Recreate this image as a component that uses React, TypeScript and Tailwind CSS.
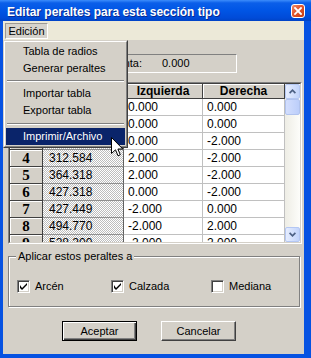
import React from 'react';

const rows = [
  { n: '1', r: '0.000', i: '0.000', d: '0.000' },
  { n: '2', r: '150.000', i: '0.000', d: '0.000' },
  { n: '3', r: '250.000', i: '0.000', d: '-2.000' },
  { n: '4', r: '312.584', i: '2.000', d: '-2.000' },
  { n: '5', r: '364.318', i: '2.000', d: '-2.000' },
  { n: '6', r: '427.318', i: '0.000', d: '-2.000' },
  { n: '7', r: '427.449', i: '-2.000', d: '0.000' },
  { n: '8', r: '494.770', i: '-2.000', d: '2.000' },
  { n: '9', r: '528.200', i: '-2.000', d: '2.000' },
];

function Check({ checked }: { checked: boolean }) {
  return (
    <div className="w-[13px] h-[13px] shrink-0 bg-white border border-t-[#808080] border-l-[#808080] border-r-white border-b-white shadow-[inset_1px_1px_0_#404040,inset_-1px_-1px_0_#d4d0c8] flex items-center justify-center">
      {checked && (
        <svg width="7" height="7" viewBox="0 0 7 7">
          <path d="M0 2 L0 5 L2 7 L7 2 L7 0 L2 5 Z" fill="#000" />
        </svg>
      )}
    </div>
  );
}

function ScrollBtn({ up }: { up: boolean }) {
  return (
    <div className="h-[15px] w-full shrink-0 rounded-[2px] border border-[#b4c7f3] bg-[linear-gradient(to_right,#e6edfe,#c2d4fb)] flex items-center justify-center">
      <svg width="7" height="5" viewBox="0 0 7 5">
        <path d={up ? 'M0.6 4.2 L3.5 1.2 L6.4 4.2' : 'M0.6 0.8 L3.5 3.8 L6.4 0.8'} stroke="#4d6185" strokeWidth="1.7" fill="none" />
      </svg>
    </div>
  );
}

export default function App() {
  return (
    <div className="relative w-[311px] h-[358px] overflow-hidden bg-[#0652e2] flex flex-col font-['Liberation_Sans',Arial,sans-serif] text-[11px] text-black select-none">
      {/* Title bar */}
      <div className="h-[21px] shrink-0 flex items-start pl-[7px] pr-[6px] bg-[linear-gradient(to_bottom,#3d8dfb_0%,#0b5fe9_14%,#0055e5_50%,#004bd8_85%,#0043c6_100%)]">
        <span className="mt-[5px] text-[12px] leading-[15px] font-bold text-white whitespace-nowrap [text-shadow:1px_1px_0_#0a2a8f]">
          Editar peraltes para esta sección tipo
        </span>
        <div className="ml-auto mt-[4px] w-[14px] h-[14px] rounded-[3px] border border-white bg-[linear-gradient(135deg,#ec8c6c_0%,#e2552c_45%,#c63c12_100%)] flex items-center justify-center">
          <svg width="8" height="8" viewBox="0 0 8 8">
            <path d="M1 1 L7 7 M7 1 L1 7" stroke="#fff" strokeWidth="1.8" strokeLinecap="square" />
          </svg>
        </div>
      </div>

      {/* Frame + client */}
      <div className="flex-1 flex flex-col pl-[3px] pr-[7px] pb-[4px]">
        {/* Menu bar */}
        <div className="h-[19px] shrink-0 bg-[#ECE9D8] flex items-start pl-[2px] pt-[2px]">
          <div className="w-[43px] h-[16px] bg-[#d6d3cc] border border-t-[#9c9a94] border-l-[#9c9a94] border-r-white border-b-white flex items-center justify-center leading-[13px]">
            Edición
          </div>
        </div>

        {/* Client */}
        <div className="flex-1 bg-[#D4D0C8] flex flex-col pl-[5px] pr-[2px]">
          {/* Field */}
          <div className="mt-[14px] w-[229px] h-[19px] shrink-0 border border-t-[#808080] border-l-[#808080] border-r-white border-b-white flex items-center leading-[13px]">
            <span className="w-[133px] text-right whitespace-nowrap">Peralte en la punta:</span>
            <span className="ml-[20px]">0.000</span>
          </div>

          {/* Table */}
          <div className="mt-[9px] w-[294px] h-[162px] shrink-0 border border-t-[#808080] border-l-[#808080] border-r-white border-b-white">
            <div className="w-full h-full border border-t-[#404040] border-l-[#404040] border-r-[#d4d0c8] border-b-[#d4d0c8] flex">
              <div className="flex-1 h-full overflow-hidden flex flex-col bg-white">
                <div className="flex h-[15px] shrink-0 font-bold text-[12px] leading-[14px]">
                  <div className="w-[33px] h-full bg-[#D4D0C8] border-r border-b border-r-[#404040] border-b-[#404040] shadow-[inset_1px_1px_0_#ffffff]" />
                  <div className="w-[81px] h-full bg-[#D4D0C8] border-r border-b border-r-[#404040] border-b-[#404040] shadow-[inset_1px_1px_0_#ffffff] flex items-center justify-center">Radio</div>
                  <div className="w-[79px] h-full bg-[#D4D0C8] border-r border-b border-r-[#404040] border-b-[#404040] shadow-[inset_1px_1px_0_#ffffff] flex items-center justify-center">Izquierda</div>
                  <div className="w-[82px] h-full bg-[#D4D0C8] border-r border-b border-r-[#404040] border-b-[#404040] shadow-[inset_1px_1px_0_#ffffff] flex items-center justify-center">Derecha</div>
                </div>
                {rows.map((row) => (
                  <div key={row.n} className="flex h-[17px] shrink-0 text-[12px] leading-[16px]">
                    <div className="w-[33px] h-full bg-[#D4D0C8] border-r border-b border-r-[#404040] border-b-[#404040] shadow-[inset_1px_1px_0_#ffffff] flex items-center justify-center font-['Liberation_Serif',serif] font-bold text-[15px]">
                      {row.n}
                    </div>
                    <div className="w-[81px] h-full border-r border-b border-r-[#606060] border-b-[#909090] bg-[repeating-conic-gradient(#bdbdbd_0_25%,#ffffff_0_50%)] bg-[length:2px_2px] pl-[6px] flex items-center">
                      {row.r}
                    </div>
                    <div className="w-[79px] h-full border-r border-b border-[#c0c0c0] pl-[4px] flex items-center">{row.i}</div>
                    <div className="w-[82px] h-full border-r border-b border-[#c0c0c0] pl-[4px] flex items-center">{row.d}</div>
                  </div>
                ))}
              </div>
              <div className="w-[15px] h-full shrink-0 flex flex-col bg-[linear-gradient(to_right,#eeede5,#fdfdfa)]">
                <ScrollBtn up={true} />
                <div className="h-[16px] w-full shrink-0 rounded-[2px] border border-[#b1c3ee] bg-[linear-gradient(to_right,#d3defd,#bccefa)]" />
                <div className="flex-1" />
                <ScrollBtn up={false} />
              </div>
            </div>
          </div>

          {/* Group box */}
          <div className="relative mt-[12px] w-[292px] h-[51px] shrink-0 border border-[#808080] shadow-[inset_1px_1px_0_#ffffff,1px_1px_0_#ffffff] flex items-start pl-[8px] pt-[23px]">
            <span className="absolute left-[7px] -top-[7px] px-[2px] bg-[#D4D0C8] leading-[13px] whitespace-nowrap">
              Aplicar estos peraltes a
            </span>
            <div className="w-[94px] flex items-center gap-[5px]">
              <Check checked={true} />
              <span className="leading-[13px]">Arcén</span>
            </div>
            <div className="w-[100px] flex items-center gap-[5px]">
              <Check checked={true} />
              <span className="leading-[13px]">Calzada</span>
            </div>
            <div className="flex items-center gap-[5px]">
              <Check checked={false} />
              <span className="leading-[13px]">Mediana</span>
            </div>
          </div>

          {/* Buttons */}
          <div className="mt-[14px] flex gap-[24px] pl-[54px]">
            <div className="w-[75px] h-[20px] border border-black shadow-[inset_1px_1px_0_#ffffff,inset_-1px_-1px_0_#404040,inset_-2px_-2px_0_#808080] flex items-center justify-center leading-[13px]">
              Aceptar
            </div>
            <div className="w-[75px] h-[20px] border border-t-white border-l-white border-r-[#404040] border-b-[#404040] shadow-[inset_-1px_-1px_0_#808080] flex items-center justify-center leading-[13px]">
              Cancelar
            </div>
          </div>
        </div>
      </div>

      {/* Dropdown menu */}
      <div className="absolute left-[3px] top-[40px] w-[125px] h-[108px] bg-[#D4D0C8] border border-t-[#d4d0c8] border-l-[#d4d0c8] border-r-[#404040] border-b-[#404040]">
        <div className="w-full h-full border border-t-white border-l-white border-r-[#808080] border-b-[#808080] p-[1px] flex flex-col leading-[13px]">
          <div className="h-[17px] shrink-0 flex items-center pl-[17px]">Tabla de radios</div>
          <div className="h-[17px] shrink-0 flex items-center pl-[17px]">Generar peraltes</div>
          <div className="h-[8px] shrink-0 pt-[3px] px-[1px]">
            <div className="h-px bg-[#808080]" />
            <div className="h-px bg-white" />
          </div>
          <div className="h-[17px] shrink-0 flex items-center pl-[17px]">Importar tabla</div>
          <div className="h-[17px] shrink-0 flex items-center pl-[17px]">Exportar tabla</div>
          <div className="h-[9px] shrink-0 pt-[4px] px-[1px]">
            <div className="h-px bg-[#808080]" />
            <div className="h-px bg-white" />
          </div>
          <div className="h-[17px] shrink-0 flex items-center pl-[17px] bg-[#0A246A] text-white">Imprimir/Archivo</div>
        </div>
      </div>

      <svg className="absolute left-[111px] top-[137px]" width="13" height="21" viewBox="0 0 13 21">
        <path d="M0.5 0.5 L0.5 16.5 L4.5 12.8 L7 18.8 L9.3 17.8 L6.9 12 L11.8 12 Z" fill="#fff" stroke="#000" strokeWidth="1" strokeLinejoin="miter" />
      </svg>
    </div>
  );
}
